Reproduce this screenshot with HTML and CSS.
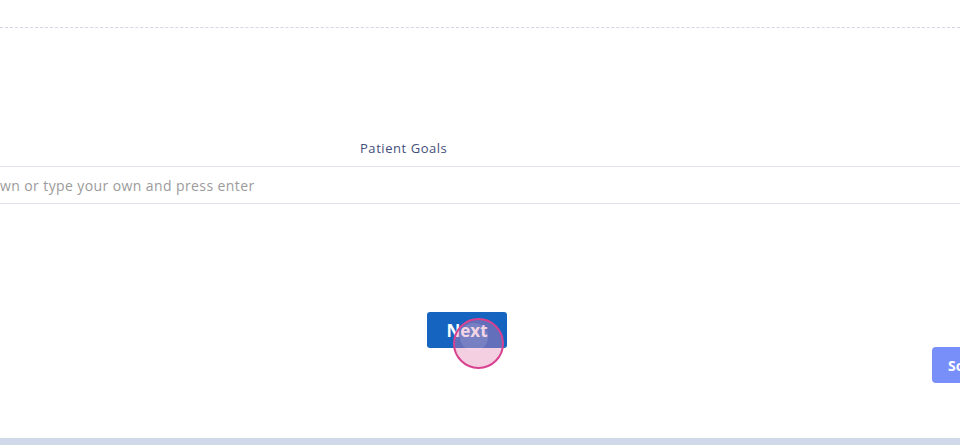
FILE: index.html
```html
<!DOCTYPE html>
<html lang="en">
<head>
<meta charset="utf-8">
<title>Patient Goals</title>
<link rel="stylesheet" href="styles.css">
</head>
<body>
<div class="page">
  <div class="top-section"></div>
  <div class="field">
    <label class="field-label" for="goals">Patient Goals</label>
    <div class="input-row">
      <input id="goals" class="goal-input" type="text" placeholder="wn or type your own and press enter">
    </div>
  </div>
  <div class="actions">
    <button class="btn-next" type="button">Next</button>
    <span class="click-ring"><span class="click-dot"></span></span>
  </div>
  <div class="side-actions">
    <button class="btn-side" type="button">Schedule</button>
  </div>
  <div class="spacer"></div>
  <div class="bottom-bar"></div>
</div>
</body>
</html>
```

FILE: styles.css
```css
* { box-sizing: border-box; }
html, body { margin: 0; padding: 0; }
body {
  width: 960px;
  height: 445px;
  overflow: hidden;
  background: #ffffff;
  font-family: "Open Sans", "Liberation Sans", sans-serif;
}
.page {
  height: 445px;
  display: flex;
  flex-direction: column;
}
.top-section {
  height: 28px;
  border-bottom: 1px dashed #d6d4e6;
  flex: none;
}
.field {
  margin-top: 110px;
  display: flex;
  flex-direction: column;
}
.field-label {
  display: block;
  margin-left: 360px;
  font-size: 13px;
  line-height: 20px;
  font-weight: 500;
  color: #44507b;
  letter-spacing: 0.55px;
}
.input-row {
  margin-top: 8px;
}
.goal-input {
  display: block;
  width: 100%;
  height: 38px;
  border: none;
  border-top: 1px solid #e1e3ec;
  border-bottom: 1px solid #e1e3ec;
  padding: 0;
  margin: 0;
  font-family: inherit;
  font-size: 14px;
  letter-spacing: 0.4px;
  color: #333;
  background: #fff;
  outline: none;
}
.goal-input::placeholder { color: #9b9b9b; }
.actions {
  position: relative;
  margin-top: 108px;
  padding-left: 427px;
  height: 36px;
  flex: none;
}
.btn-next {
  width: 80px;
  height: 36px;
  border: none;
  border-radius: 3px;
  background: #1565c0;
  color: #fff;
  font-family: inherit;
  font-size: 17px;
  font-weight: 700;
  padding: 0;
}
.click-ring {
  position: absolute;
  left: 453px;
  top: 6px;
  width: 51px;
  height: 51px;
  border-radius: 50%;
  border: 2px solid #d8418f;
  background: rgba(226, 130, 180, 0.38);
}
.click-dot {
  position: absolute;
  left: 5px;
  top: 3px;
  width: 28px;
  height: 28px;
  border-radius: 50%;
  background: rgba(255, 255, 255, 0.12);
}
.side-actions {
  display: flex;
  justify-content: flex-end;
  margin-top: -1px;
  margin-right: -60px;
  flex: none;
}
.btn-side {
  width: 88px;
  height: 36px;
  border: none;
  border-radius: 4px;
  background: #788ffa;
  color: #fff;
  font-family: inherit;
  font-size: 14px;
  font-weight: 700;
  text-align: left;
  padding: 0 0 0 16px;
  white-space: nowrap;
  overflow: hidden;
}
.spacer { flex: 1; }
.bottom-bar {
  height: 7px;
  background: #d0d9ea;
  flex: none;
}
```
